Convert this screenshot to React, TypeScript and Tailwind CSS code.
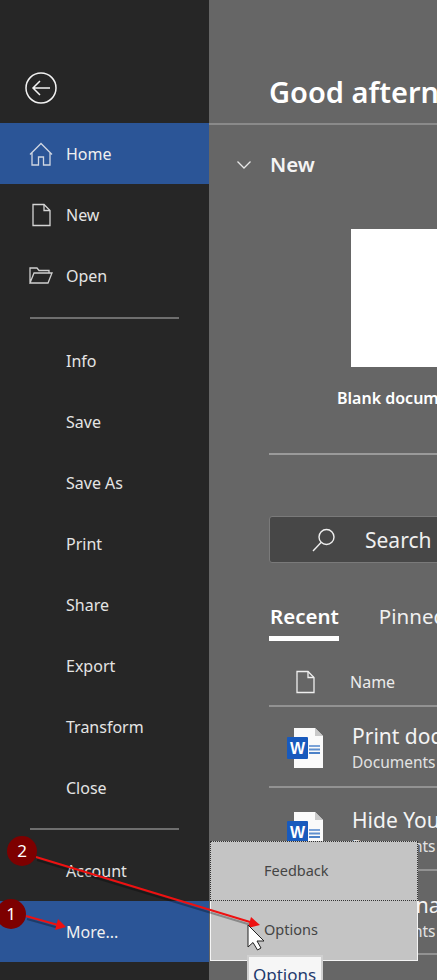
const font = { fontFamily: '"Noto Sans", "Open Sans", sans-serif' };

function NavItem({ label, icon, active }: { label: string; icon?: React.ReactNode; active?: boolean }) {
  return (
    <div className={active ? "relative flex h-[61px] items-center bg-[#2b5597] text-[#f0f0f0]" : "relative flex h-[61px] items-center text-[#e4e4e4]"}>
      {icon && <div className="flex w-[66px] shrink-0 justify-end pr-[13px]">{icon}</div>}
      <span className={icon ? "text-[16px]" : "pl-[66px] text-[16px]"}>{label}</span>
    </div>
  );
}

function WordIcon() {
  return (
    <svg width="37" height="41" viewBox="0 0 37 41" className="shrink-0">
      <path d="M7 0H28L36 8V40H7Z" fill="#fafafa" />
      <path d="M28 0V8H36Z" fill="#c9c9c9" />
      <rect x="22" y="17" width="11" height="2" fill="#7ba3d8" />
      <rect x="22" y="20.5" width="11" height="2" fill="#5f8fce" />
      <rect x="22" y="24" width="11" height="2" fill="#4d82c8" />
      <rect x="0" y="9" width="21" height="22" rx="1" fill="#185abd" />
      <text x="10.5" y="26" textAnchor="middle" fontSize="16" fontWeight="700" fill="#fff" fontFamily="Liberation Sans, sans-serif">W</text>
    </svg>
  );
}

function DocIcon({ className }: { className: string }) {
  return (
    <svg viewBox="0 0 19 23" className={className} fill="none" stroke="currentColor" strokeWidth="1.3">
      <path d="M1 1H12L18 7V22H1Z" />
      <path d="M12 1V7H18" />
    </svg>
  );
}

function FileRow({ title, sub, wrap, row }: { title: string; sub: string; wrap: string; row: string }) {
  return (
    <div className={wrap}>
      <div className={row}>
        <WordIcon />
        <div className="ml-[28px] whitespace-nowrap">
          <div className="-mt-[7px] text-[21px] leading-[30px] text-[#f4f4f4]">{title}</div>
          <div className="text-[15.5px] leading-[22px] text-[#e2e2e2]">{sub}</div>
        </div>
      </div>
    </div>
  );
}

export default function App() {
  return (
    <div className="relative flex h-[980px] w-[437px] overflow-hidden bg-[#666666]" style={font}>
      <aside className="flex w-[209px] shrink-0 flex-col bg-[#262626]">
        <div className="h-[123px] pl-[25px] pt-[72px]">
          <svg width="32" height="32" viewBox="0 0 32 32" fill="none" stroke="#f2f2f2" strokeWidth="1.5">
            <circle cx="16" cy="16" r="15" />
            <path d="M25 16H8M15 9L8 16L15 23" />
          </svg>
        </div>
        <NavItem
          active
          label="Home"
          icon={
            <svg width="24" height="24" viewBox="0 0 24 24" fill="none" stroke="#cfd6e2" strokeWidth="1.3">
              <path d="M1 12.5L12 1.5L23 12.5M3 11V23H9.5V15H14.5V23H21V11" />
            </svg>
          }
        />
        <NavItem label="New" icon={<DocIcon className="mr-[2px] h-[24px] w-[19px] text-[#d4d4d4]" />} />
        <NavItem
          label="Open"
          icon={
            <svg width="24" height="20" viewBox="0 0 24 20" fill="none" stroke="#cfcfcf" strokeWidth="1.3">
              <path d="M1 17V2H8L10 4.5H20V7M1 17L5 7H23L19 17Z" />
            </svg>
          }
        />
        <div className="mx-[30px] my-[11px] h-[2px] bg-[#6e6e6e]" />
        <div className="flex flex-col">
          {["Info", "Save", "Save As", "Print", "Share", "Export", "Transform", "Close"].map((l) => (
            <NavItem key={l} label={l} />
          ))}
        </div>
        <div className="mx-[30px] mb-[10px] mt-[10px] h-[2px] bg-[#6e6e6e]" />
        <NavItem label="Account" />
        <NavItem active label="More..." />
      </aside>

      <main className="flex min-w-0 flex-1 flex-col">
        <div className="flex h-[125px] shrink-0 items-start border-b-2 border-[#8a8a8a] pl-[60px] pt-[70px]">
          <span className="whitespace-nowrap text-[29px] font-semibold leading-[44px] text-white">Good afternoon</span>
        </div>
        <div className="flex h-[104px] shrink-0 items-start pt-[24px]">
          <svg width="14" height="8" viewBox="0 0 14 8" fill="none" stroke="#e8e8e8" strokeWidth="1.3" className="ml-[28px] mt-[12px]">
            <path d="M0.5 0.5L7 7L13.5 0.5" />
          </svg>
          <span className="ml-[19px] text-[20.5px] font-semibold leading-[30px] text-[#f4f4f4]">New</span>
        </div>
        <div className="ml-[142px] h-[138px] w-[120px] shrink-0 bg-white" />
        <div className="ml-[128px] mt-[20px] whitespace-nowrap text-[16px] font-semibold leading-[22px] text-white">Blank document</div>
        <div className="ml-[60px] mt-[44px] h-[2px] w-[300px] shrink-0 bg-[#9a9a9a]" />
        <div className="ml-[60px] mt-[61px] flex h-[47px] w-[300px] shrink-0 items-center rounded-[3px] border border-[#7a7a7a] bg-[#474747]">
          <svg width="24" height="24" viewBox="0 0 24 24" fill="none" stroke="#f0f0f0" strokeWidth="1.4" className="ml-[42px]">
            <circle cx="14.5" cy="9" r="7.5" />
            <path d="M9 14.5L1 23" />
          </svg>
          <span className="ml-[29px] pt-[3px] text-[21px] text-[#f0f0f0]">Search</span>
        </div>
        <div className="ml-[60px] mt-[38px] flex shrink-0 items-start whitespace-nowrap">
          <div className="flex flex-col">
            <span className="px-[1px] text-[20.5px] font-semibold leading-[31px] text-white">Recent</span>
            <div className="mt-[4px] h-[5px] w-[70px] bg-white" />
          </div>
          <span className="ml-[39px] text-[20.5px] leading-[31px] text-[#f0f0f0]">Pinned</span>
        </div>
        <div className="ml-[60px] mt-[29px] flex h-[37px] shrink-0 items-start border-b-2 border-[#929292] pl-[27px]">
          <DocIcon className="h-[24px] w-[19px] text-[#eeeeee]" />
          <span className="ml-[35px] text-[16px] leading-[24px] text-[#ececec]">Name</span>
        </div>
        <FileRow
          wrap="ml-[60px]"
          row="flex h-[81px] items-start border-b-2 border-[#929292] pl-[18px] pt-[21px]"
          title="Print document"
          sub="Documents"
        />
        <FileRow
          wrap="ml-[63px]"
          row="flex h-[83px] items-start border-b-2 border-[#929292] pl-[15px] pt-[24px]"
          title="Hide Your"
          sub="Documents"
        />
        <FileRow
          wrap="ml-[60px]"
          row="flex h-[84px] items-start border-b-2 border-[#929292] pl-[18px] pt-[26px]"
          title="Insert name"
          sub="Documents"
        />
        <FileRow
          wrap="ml-[60px]"
          row="flex h-[84px] items-start pl-[18px] pt-[26px]"
          title="Print"
          sub="Documents"
        />
      </main>

      {/* Backstage "More" flyout */}
      <div className="absolute left-[210px] top-[841px] w-[208px] text-[14.5px] text-[#444444]">
        <div className="flex h-[60px] items-center border border-dotted border-[#333333] bg-[#c4c4c4] pl-[53px]">Feedback</div>
        <div className="flex h-[60px] items-center border border-t-0 border-[#f4f4f4] bg-[#c4c4c4] pb-[2px] pl-[53px]">Options</div>
      </div>
      <div className="absolute left-[247px] top-[955px] h-[30px] w-[76px] border-2 border-[#d0d0d0] bg-[#f6f6f6] pl-[4px] text-[17px] leading-[35px] text-[#1f3a6e]">Options</div>

      {/* Annotation arrows, badges and pointer */}
      <svg className="absolute left-0 top-0" width="437" height="980" viewBox="0 0 437 980" fill="none">
        <g opacity="0.3" transform="translate(1 3)">
          <path d="M36 857L250 922M26 916L58 925" stroke="#000" strokeWidth="2" />
        </g>
        <path d="M36 857L250 922M26 916L58 925" stroke="#ee1111" strokeWidth="2" />
        <path d="M260 925L248 928L251 917Z" fill="#ee1111" />
        <path d="M66 927L55 930L58 919Z" fill="#ee1111" />
        <path d="M248 925V947L253 942.5L257.5 950L261 948L257 941H264Z" fill="#fff" stroke="#222" strokeWidth="1" />
      </svg>
      <div className="absolute left-[7px] top-[836px] flex h-[30px] w-[30px] items-center justify-center rounded-full bg-[#7d0000] text-[17px] text-white">2</div>
      <div className="absolute left-[-4px] top-[899px] flex h-[30px] w-[30px] items-center justify-center rounded-full bg-[#7d0000] text-[17px] text-white">1</div>
    </div>
  );
}
